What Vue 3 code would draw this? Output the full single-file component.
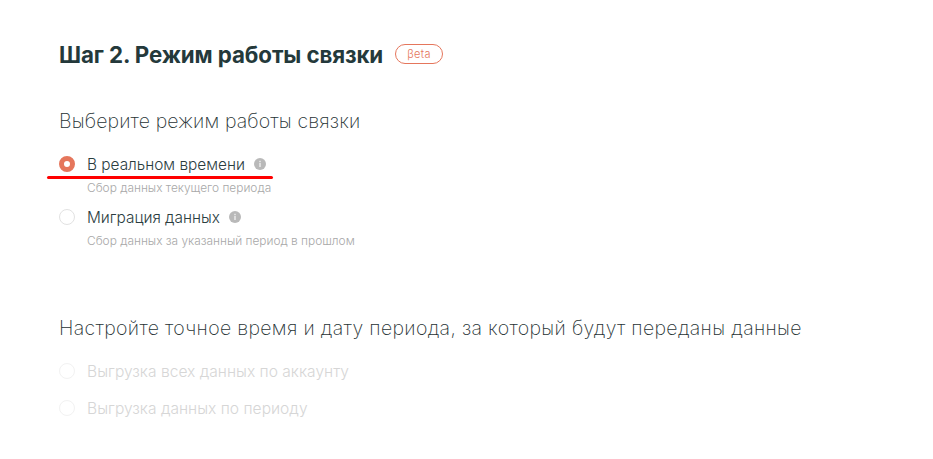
<template>
  <div class="page">
    <h2 class="title">
      Шаг 2. Режим работы связки
      <span class="beta">βeta</span>
    </h2>

    <section class="modes">
      <h3 class="subtitle">Выберите режим работы связки</h3>
      <div v-for="mode in modes" :key="mode.label" class="option">
        <span class="radio" :class="{ checked: mode.checked }"></span>
        <div class="option-text">
          <div class="label">
            {{ mode.label }}
            <svg class="info" width="12" height="12" viewBox="0 0 12 12">
              <circle cx="6" cy="6" r="6" fill="#b9b9b9" />
              <rect x="5.2" y="5" width="1.6" height="4" fill="#e8e8e8" />
              <rect x="5.2" y="2.8" width="1.6" height="1.4" fill="#e8e8e8" />
            </svg>
          </div>
          <div class="hint">{{ mode.hint }}</div>
        </div>
      </div>
      <span class="underline"></span>
    </section>

    <section class="period">
      <h3 class="subtitle">Настройте точное время и дату периода, за который будут переданы данные</h3>
      <div v-for="item in periods" :key="item" class="option disabled">
        <span class="radio"></span>
        <div class="label">{{ item }}</div>
      </div>
    </section>
  </div>
</template>

<script setup>
const modes = [
  { label: 'В реальном времени', hint: 'Сбор данных текущего периода', checked: true },
  { label: 'Миграция данных', hint: 'Сбор данных за указанный период в прошлом', checked: false },
]

const periods = ['Выгрузка всех данных по аккаунту', 'Выгрузка данных по периоду']
</script>

<style>
html,
body {
  background: #fff;
}
</style>

<style scoped>
.page {
  width: 933px;
  height: 459px;
  box-sizing: border-box;
  padding: 41px 0 0 59px;
  overflow: hidden;
  font-family: Inter, "Liberation Sans", sans-serif;
  color: #2b3d3f;
}

.title {
  display: flex;
  align-items: center;
  height: 26px;
  margin: 0;
  font-size: 22.3px;
  font-weight: 700;
  letter-spacing: -0.1px;
  color: #24393b;
}

.beta {
  display: flex;
  align-items: center;
  justify-content: center;
  box-sizing: border-box;
  width: 48px;
  height: 20px;
  margin-left: 12px;
  border: 1px solid #e5765c;
  border-radius: 10px;
  font-size: 11px;
  font-weight: 300;
  letter-spacing: 0.4px;
  color: #e5765c;
}

.modes {
  position: relative;
  margin-top: 42px;
}

.subtitle {
  height: 24px;
  margin: 0 0 21px;
  font-size: 19.5px;
  font-weight: 200;
  letter-spacing: 0.14px;
  line-height: 24px;
  color: #1f3234;
}

.option {
  display: flex;
  gap: 12px;
  margin-bottom: 12px;
}

.radio {
  flex: none;
  box-sizing: border-box;
  width: 16px;
  height: 16px;
  margin-top: 2px;
  border: 1px solid #e2e2e2;
  border-radius: 50%;
}

.radio.checked {
  border: 5px solid #e5765c;
}

.label {
  display: flex;
  align-items: center;
  gap: 9px;
  height: 20px;
  font-size: 15.4px;
  font-weight: 300;
  color: #2b3d3f;
}

.hint {
  margin-top: 7px;
  font-size: 11.9px;
  font-weight: 300;
  line-height: 14px;
  color: #a8a8a8;
}

.underline {
  position: absolute;
  left: -12px;
  top: 67px;
  width: 226px;
  height: 3px;
  border-radius: 2px;
  background: #f00;
}

.period {
  margin-top: 68px;
}

.period .subtitle {
  letter-spacing: 0.33px;
}

.disabled {
  margin-bottom: 17px;
}

.disabled .label {
  font-size: 15.6px;
  color: #d6d6d6;
}

.disabled .radio {
  border-color: #f2f2f2;
}
</style>
